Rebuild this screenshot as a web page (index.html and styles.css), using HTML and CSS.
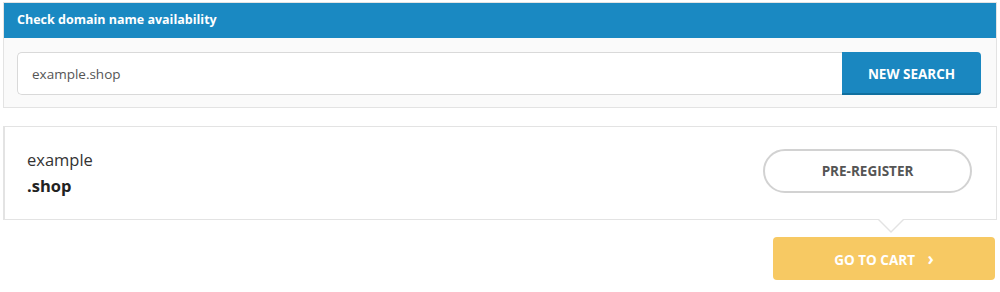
FILE: index.html
```html
<!doctype html>
<html lang="en">
  <head>
    <meta charset="utf-8">
    <title>Domain search</title>
    <link rel="stylesheet" href="styles.css">
  </head>
  <body>
    <div class="search-panel">
      <div class="search-head">Check domain name availability</div>
      <div class="search-body">
        <div class="search-box">
          <input class="search-input" type="text" value="example.shop">
          <button class="search-btn">NEW SEARCH</button>
        </div>
      </div>
    </div>
    <div class="result">
      <div class="result-name">
        <div class="result-sld">example</div>
        <div class="result-tld">.shop</div>
      </div>
      <button class="prereg-btn">PRE-REGISTER</button>
    </div>
    <div class="cart-row">
      <button class="cart-btn">GO TO CART <span class="cart-arrow">&rsaquo;</span></button>
    </div>
  </body>
</html>
```

FILE: styles.css
```css
html, body {
  margin: 0;
  padding: 0;
  background: #fff;
}
body {
  padding: 2px 3px 0 3px;
  font-family: "Open Sans", "Liberation Sans", sans-serif;
  color: #333;
}
.search-panel {
  border: 1px solid #e3e3e3;
  background: #fafafa;
}
.search-head {
  background: #1a89c2;
  color: #fff;
  font-weight: bold;
  font-size: 12.5px;
  height: 35px;
  line-height: 33px;
  padding: 0 13px;
}
.search-body {
  padding: 14px 15px 12px 13px;
}
.search-box {
  display: flex;
  height: 43px;
}
.search-input {
  flex: 1;
  box-sizing: border-box;
  height: 43px;
  border: 1px solid #d9d9d9;
  border-right: none;
  border-radius: 5px 0 0 5px;
  background: #fff;
  padding: 0 14px;
  font-family: inherit;
  font-size: 13.5px;
  color: #555;
  outline: none;
}
.search-btn {
  width: 139px;
  height: 43px;
  border: none;
  border-bottom: 2px solid #106f9f;
  border-radius: 0 4px 4px 0;
  background: #1a87c0;
  color: #fff;
  font-family: inherit;
  font-weight: bold;
  font-size: 13.5px;
  padding: 2px 0 0;
}
.result {
  position: relative;
  margin-top: 18px;
  display: flex;
  align-items: center;
  justify-content: space-between;
  height: 92px;
  border: 1px solid #e3e3e3;
  border-left: 2px solid #e3e3e3;
  background: #fff;
  padding: 0 24px 0 22px;
}
.result::after,
.result::before {
  content: "";
  position: absolute;
  left: 872px;
  border: 14px solid transparent;
  border-bottom: none;
}
.result::before {
  bottom: -14px;
  border-top-color: #e3e3e3;
}
.result::after {
  bottom: -12px;
  border-top-color: #fff;
}
.result-sld {
  font-size: 16.5px;
  color: #333;
  line-height: 26px;
}
.result-tld {
  font-size: 16.5px;
  font-weight: bold;
  color: #222;
  line-height: 26px;
}
.prereg-btn {
  width: 209px;
  height: 44px;
  margin-bottom: 4px;
  border: 2px solid #d2d2d2;
  border-radius: 22px;
  background: #fff;
  color: #555;
  font-family: inherit;
  font-weight: bold;
  font-size: 13.5px;
}
.cart-row {
  display: flex;
  justify-content: flex-end;
  margin-top: 17px;
  padding-right: 2px;
}
.cart-btn {
  width: 222px;
  height: 43px;
  border: none;
  border-radius: 4px;
  background: #f7c963;
  color: #fff;
  font-family: inherit;
  font-weight: bold;
  font-size: 13.5px;
  padding: 0;
}
.cart-arrow {
  font-size: 17px;
  margin-left: 9px;
}
```
